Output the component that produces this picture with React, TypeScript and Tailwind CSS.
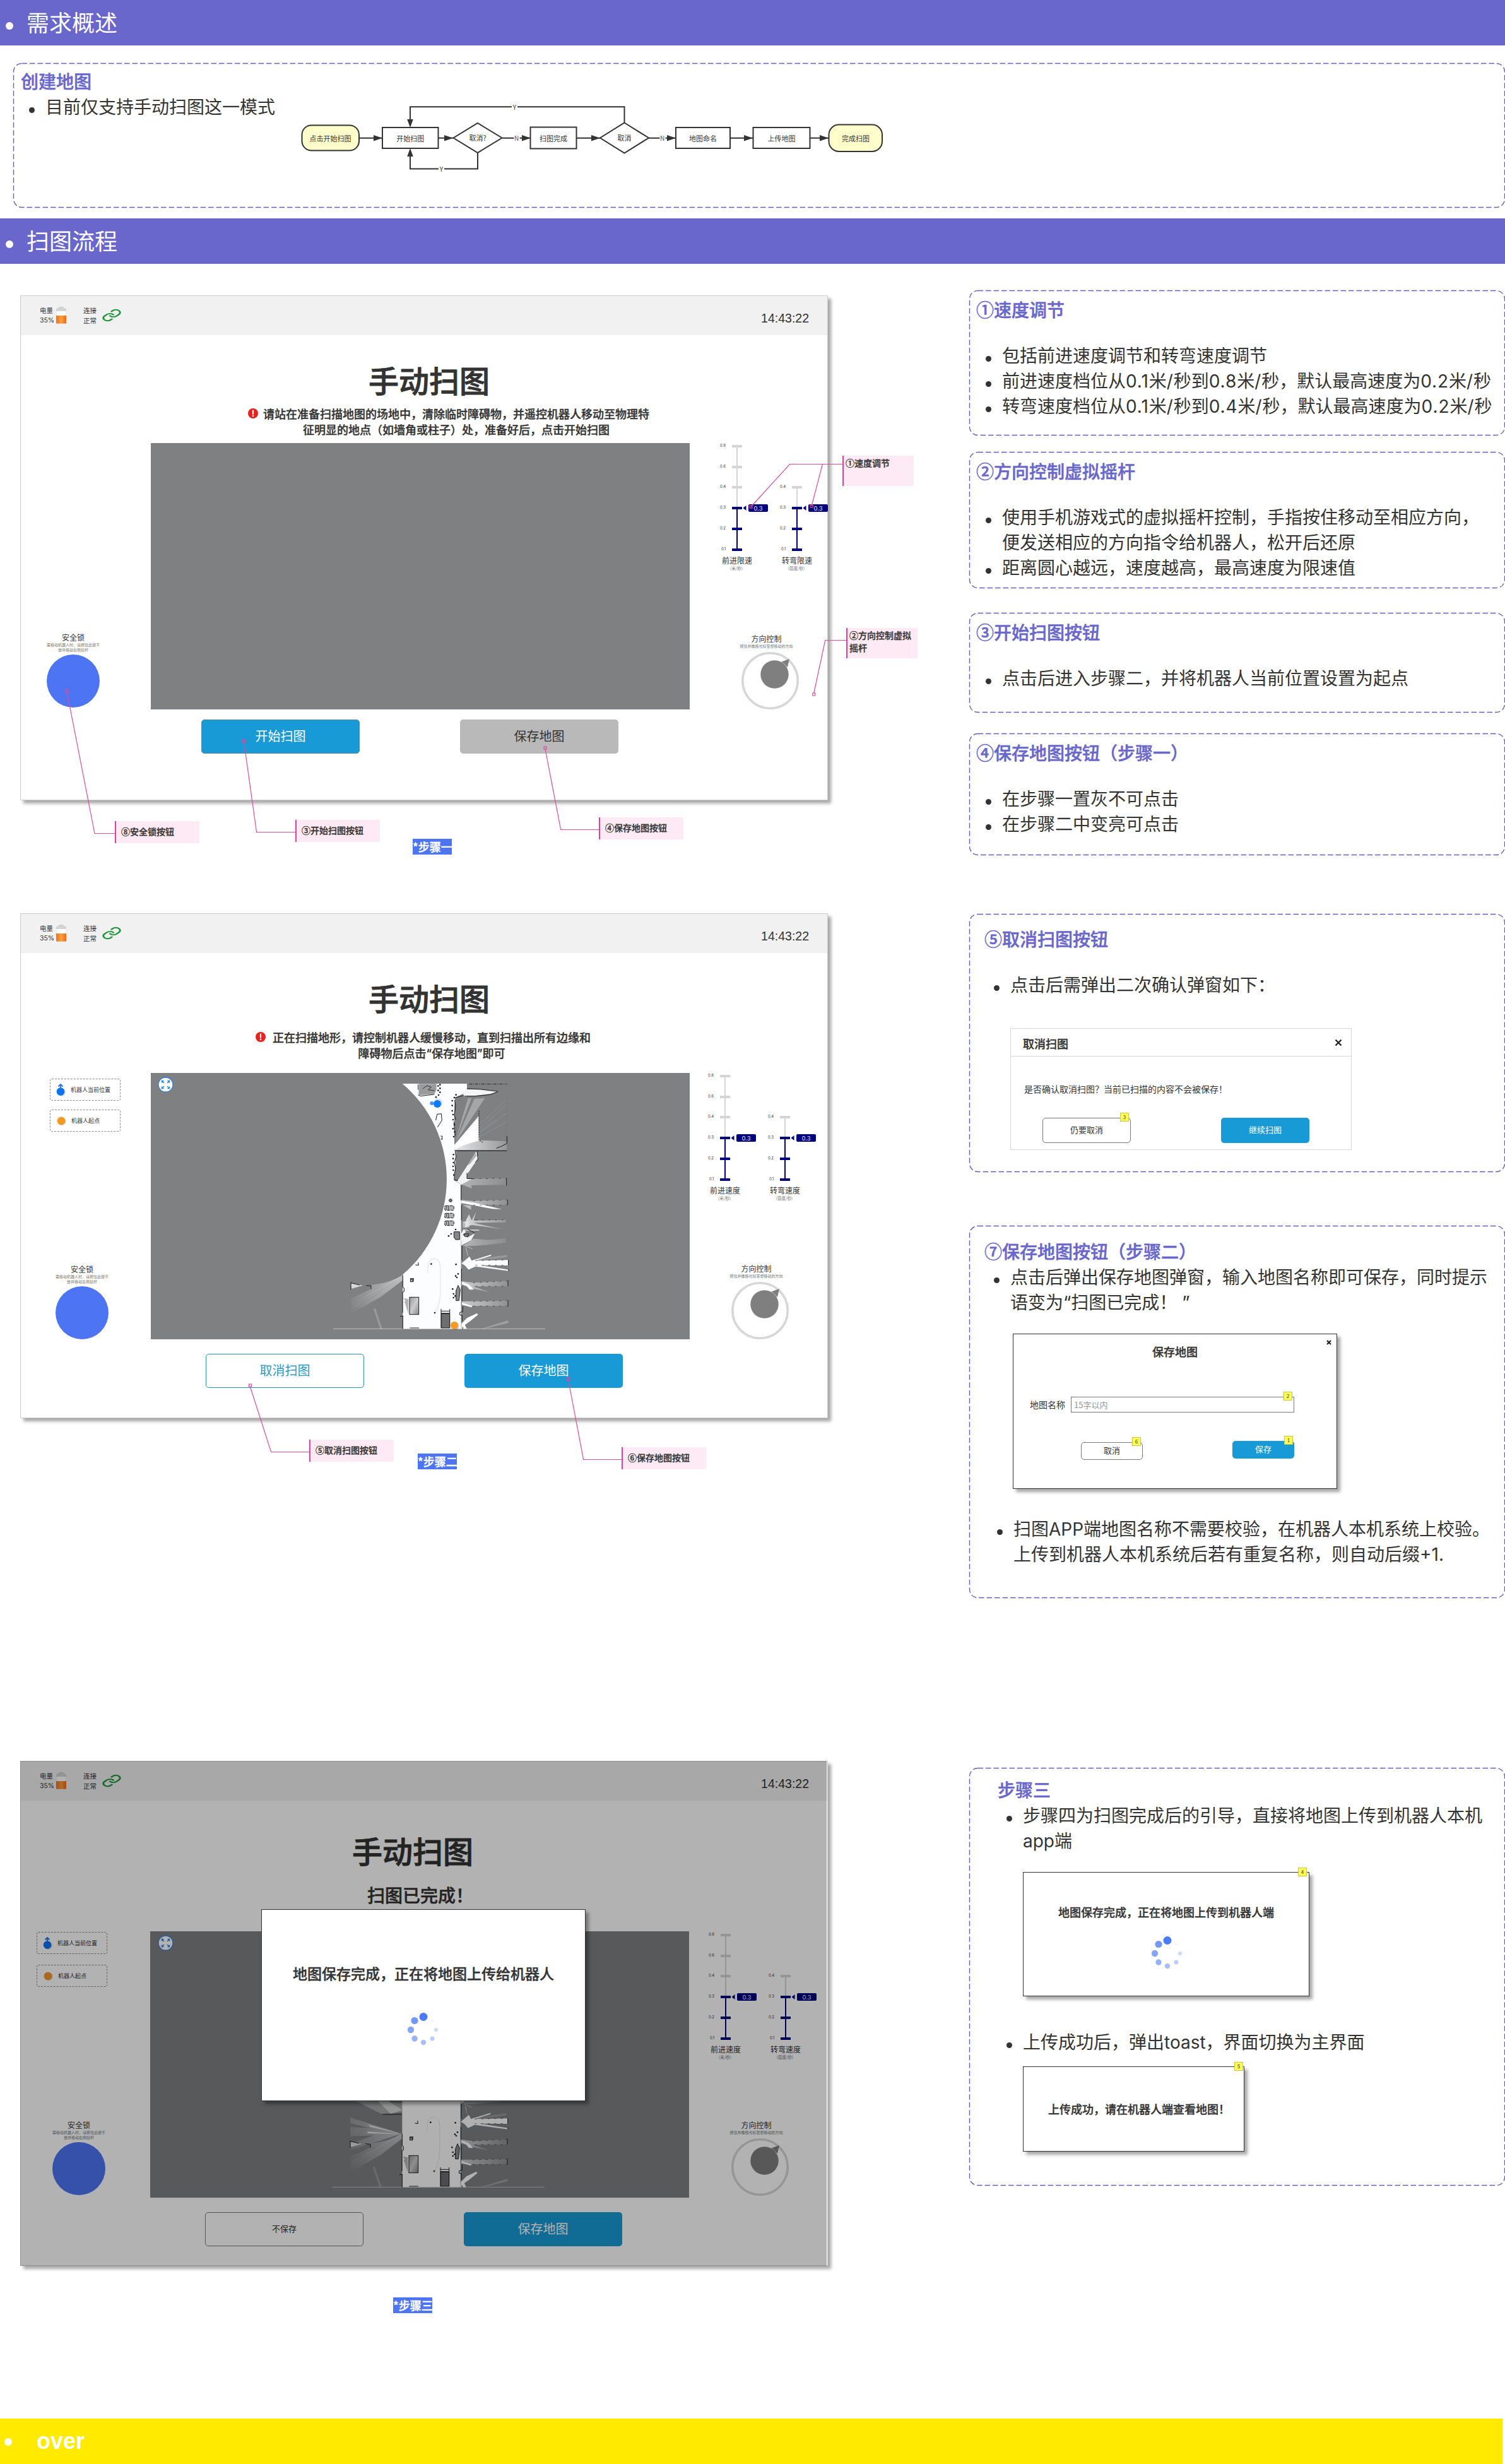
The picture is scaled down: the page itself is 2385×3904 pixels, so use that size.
import type { ReactNode } from "react";
import { Link } from "lucide-react";

/* ---------- shared pieces ---------- */

function SectionBar({ children }: { children: ReactNode }) {
  return (
    <div className="flex h-[72px] items-center bg-[#6966cc] pl-[9px] text-white">
      <span className="mt-[10px] size-3 rounded-full bg-white" />
      <h1 className="ml-[21px] pb-1 text-[36px] leading-[48px]">{children}</h1>
    </div>
  );
}

function DashedFrame() {
  return (
    <svg className="pointer-events-none absolute inset-0 size-full overflow-visible">
      <rect x="0.5" y="0.5" width="100%" height="100%" rx="13" fill="none" stroke="#6462b8" strokeWidth="1.4" strokeDasharray="8.5 4" />
    </svg>
  );
}

function Panel({ className, children }: { className: string; children: ReactNode }) {
  return (
    <section className={`relative w-[848px] ${className}`}>
      <DashedFrame />
      {children}
    </section>
  );
}

function PanelTitle({ className = "", children }: { className?: string; children: ReactNode }) {
  return (
    <h2 className={`text-[28px] leading-[40px] font-medium text-[#6966cc] [-webkit-text-stroke:0.5px_#6966cc] ${className}`}>
      {children}
    </h2>
  );
}

function Bullet({ className = "", children }: { className?: string; children: ReactNode }) {
  return (
    <li className={`relative top-[2px] flex ${className}`}>
      <span className="mt-[20px] mr-[17px] size-[9px] shrink-0 rounded-full bg-[#333]" />
      <p className="font-[Inter,'Noto_Sans_CJK_SC',sans-serif] text-[28px] leading-[40px] whitespace-pre">{children}</p>
    </li>
  );
}

function Num({ children }: { children: ReactNode }) {
  return <span className="tracking-[0.9px]">{children}</span>;
}

function NoteBadge({ className, children }: { className: string; children: ReactNode }) {
  return (
    <span className={`absolute flex size-[14px] items-center justify-center border border-[#c9c93e] bg-[#ffff55] text-[8px] leading-none text-[#333] ${className}`}>
      {children}
    </span>
  );
}

const SPINNER_DOTS = [
  [0, -20.5, 6.5, "#4a7bf9"],
  [-14, -14.5, 5.6, "#7398fb"],
  [-20, 0, 5.2, "#84a5fa"],
  [-14, 14, 4.7, "#96b2fa"],
  [0, 20, 4.2, "#a7bffb"],
  [14, 14, 3.5, "#bccdfb"],
  [20, 0, 3.1, "#ccd9fb"],
  [14, -14.5, 2, "#eef3fe"],
] as const;

function Spinner({ className }: { className: string }) {
  return (
    <svg viewBox="-28 -28 56 56" className={`size-14 ${className}`}>
      {SPINNER_DOTS.map(([x, y, r, fill]) => (
        <circle key={fill} cx={x} cy={y} r={r} fill={fill} />
      ))}
    </svg>
  );
}

/* ---------- flow chart ---------- */

function FlowArrow({ x1, x2, label }: { x1: number; x2: number; label?: boolean }) {
  const mid = (x1 + x2) / 2;
  return (
    <g>
      <path d={`M${x1} 218.7H${x2}`} stroke="#333" strokeWidth="2" />
      <path d={`M${x2} 218.7l-14 -4.8v9.6z`} fill="#333" />
      {label && (
        <>
          <rect x={mid - 4} y="213" width="9" height="12" fill="#fff" />
          <text x={mid} y="223" fontSize="10" textAnchor="middle" fill="#555">N</text>
        </>
      )}
    </g>
  );
}

function FlowChart() {
  const boxes = [
    [606, 202, 88.5, 33, "开始扫图"],
    [840.5, 201.5, 73, 34, "扫图完成"],
    [1071, 202, 86, 33, "地图命名"],
    [1193.5, 202, 90, 33, "上传地图"],
  ] as const;
  return (
    <svg viewBox="470 150 940 130" className="absolute top-[50px] left-[449px] h-[130px] w-[940px]" fill="none">
      <g stroke="#333" strokeWidth="2">
        <path d="M989.5 195V169.3H650V190" />
        <path d="M757 242V267.5H650V246" />
        <rect x="478.5" y="198.5" width="90.5" height="40" rx="15" fill="#ffffcc" />
        <rect x="1313.5" y="197.5" width="84.5" height="42.5" rx="16" fill="#ffffcc" />
        {boxes.map(([x, y, w, h, t]) => (
          <rect key={t} x={x} y={y} width={w} height={h} fill="#fff" />
        ))}
        <path d="M757 195l38.5 23.5l-38.5 23.5l-38.5 -23.5z" fill="#fff" />
        <path d="M989.5 194.5l38.5 24l-38.5 24l-38.5 -24z" fill="#fff" />
      </g>
      <path d="M650 202l-4.8 -13h9.6z" fill="#333" />
      <path d="M650 235l-4.8 13h9.6z" fill="#333" />
      <FlowArrow x1={569} x2={606} />
      <FlowArrow x1={695} x2={718} />
      <FlowArrow x1={796} x2={841} label />
      <FlowArrow x1={914} x2={951} />
      <FlowArrow x1={1028} x2={1071} label />
      <FlowArrow x1={1157} x2={1193} />
      <FlowArrow x1={1283} x2={1313} />
      <rect x="811" y="164" width="9" height="11" fill="#fff" />
      <rect x="695" y="262" width="9" height="11" fill="#fff" />
      <g fontSize="11" textAnchor="middle" fill="#333">
        <text x="815.5" y="174" fontSize="10">Y</text>
        <text x="699.5" y="272" fontSize="10">Y</text>
        <text x="523.5" y="224">点击开始扫图</text>
        <text x="757" y="223">取消?</text>
        <text x="989.5" y="223">取消</text>
        <text x="1356" y="224">完成扫图</text>
        {boxes.map(([x, , w, , t]) => (
          <text key={t} x={x + w / 2} y="224">{t}</text>
        ))}
      </g>
    </svg>
  );
}

/* ---------- tablet screen parts ---------- */

function StatusBar() {
  return (
    <header className="flex h-[62px] shrink-0 bg-[#f1f1f1]">
      <div className="mt-[15px] ml-[30px] w-[22px] text-[10.5px] leading-[15px] whitespace-nowrap">
        电量<br />
        <span className="font-[Inter,sans-serif]">35%</span>
      </div>
      <svg viewBox="0 0 18 28" className="mt-[17px] ml-[3px] h-7 w-[18px] shrink-0">
        <defs>
          <linearGradient id="charge">
            <stop offset="0" stopColor="#f0701c" />
            <stop offset="0.5" stopColor="#fca041" />
            <stop offset="1" stopColor="#ee6a14" />
          </linearGradient>
        </defs>
        <rect x="5" y="0" width="8" height="4" rx="1.5" fill="#cfcfcf" />
        <rect x="1" y="2" width="16" height="25" rx="2.5" fill="#d4d4d4" />
        <rect x="1.5" y="7" width="15" height="8" fill="#fff" />
        <rect x="1" y="14" width="16" height="12.5" fill="url(#charge)" />
      </svg>
      <div className="mt-[15px] ml-[26px] w-[22px] text-[10.5px] leading-[16px] whitespace-nowrap">
        连接<br />正常
      </div>
      <Link className="mt-[20px] ml-[7px] h-[21px] w-[32px]" color="#1c9638" strokeWidth={2.2} preserveAspectRatio="none" />
      <time className="mt-[23px] mr-[29px] ml-auto font-['Liberation_Sans',sans-serif] text-[19.5px] leading-[24px]">14:43:22</time>
    </header>
  );
}

function AlertIcon({ className }: { className: string }) {
  return (
    <svg viewBox="0 0 16 16" className={`size-4 shrink-0 ${className}`}>
      <circle cx="8" cy="8" r="8" fill="#e9201b" />
      <path d="M8 3.5v5.5" stroke="#fff" strokeWidth="2.2" strokeLinecap="round" />
      <circle cx="8" cy="12" r="1.3" fill="#fff" />
    </svg>
  );
}

function SafetyLock({ className }: { className: string }) {
  return (
    <div className={`mt-auto flex w-[84px] flex-col items-center ${className}`}>
      <div className="text-[12px] leading-[16px]">安全锁</div>
      <p className="text-center text-[6px] leading-[8px] whitespace-nowrap text-[#777]">
        需移动机器人时，请按住此键不<br />放并移动右侧摇杆
      </p>
      <div className="mt-[3px] size-[84px] rounded-full bg-[#4d74f2]" />
    </div>
  );
}

function Legends({ className, gap }: { className: string; gap: string }) {
  return (
    <div className={`flex w-[112px] flex-col text-[9px] ${className} ${gap}`}>
      <div className="flex h-[35px] items-center rounded-[3px] border border-dashed border-[#8a8a8a] pl-2">
        <svg viewBox="0 0 18 20" className="h-5 w-[18px]">
          <circle cx="9.5" cy="13.5" r="6.5" fill="#000" opacity=".15" />
          <path d="M8 1v8M4.5 4.5L8 1l3.5 3.5" stroke="#2b7de0" strokeWidth="2" fill="none" />
          <circle cx="8" cy="12.5" r="6.3" fill="#0a73f5" />
        </svg>
        <span className="ml-[6px]">机器人当前位置</span>
      </div>
      <div className="flex h-[35px] items-center rounded-[3px] border border-dashed border-[#8a8a8a] pl-2">
        <svg viewBox="0 0 18 20" className="h-5 w-[18px]">
          <circle cx="10" cy="10.5" r="6.5" fill="#000" opacity=".15" />
          <circle cx="9" cy="10" r="6.5" fill="#f39a27" />
        </svg>
        <span className="ml-[7px]">机器人起点</span>
      </div>
    </div>
  );
}

function SpeedScale({ marks, label, unit }: { marks: [number, string][]; label: string; unit: string }) {
  const top = marks[0][0];
  return (
    <div className="w-[95px] shrink-0">
      <svg viewBox="0 0 95 174" className="h-[174px] w-[95px] overflow-visible">
        <path d={`M40 ${top}V103`} stroke="#d5d5d5" strokeWidth="2" />
        <path d="M40 103V169" stroke="#00007f" strokeWidth="2" />
        {marks.map(([y, t]) => (
          <g key={t}>
            <rect x="32" y={y - 2} width="16" height="4" fill={y < 100 ? "#d5d5d5" : "#00007f"} />
            <text x={t === "0.1" ? 15 : 13} y={y + 0.5} fontSize="6" fill="#333" fontFamily="Inter">{t}</text>
          </g>
        ))}
        <path d="M49.5 103l5 -4v8z" fill="#00007f" />
        <rect x="58" y="97" width="31" height="12" rx="2" fill="#00007f" />
        <text x="73.5" y="106.5" fontSize="9.5" fill="#e6e6ff" textAnchor="middle" fontFamily="Inter">0.3</text>
      </svg>
      <div className="mt-[4px] w-[80px] text-center text-[12px] leading-[16px]">{label}</div>
      <div className="w-[78px] text-center text-[6.5px] leading-[8px] text-[#777]">{unit}</div>
    </div>
  );
}

const FORWARD: [number, string][] = [[5, "0.8"], [38, "0.6"], [70, "0.4"], [103, "0.3"], [136, "0.2"], [169, "0.1"]];
const TURN = FORWARD.slice(2);

function Joystick({ className }: { className: string }) {
  return (
    <div className={`mt-auto w-[91px] ${className}`}>
      <div className="-mx-3 pr-3 text-center text-[12px] leading-[16px]">方向控制</div>
      <div className="-mx-3 pr-3 text-center text-[6px] leading-[8px] whitespace-nowrap text-[#777]">按住并推移光标至想移动的方向</div>
      <svg viewBox="0 0 91 91" className="mt-[5px] size-[91px]">
        <circle cx="45.5" cy="45.5" r="43.7" fill="#fff" stroke="#d7d7d7" strokeWidth="3.6" />
        <path d="M62 16L76 11L73 24z" fill="#7f7f7f" />
        <circle cx="52.5" cy="35.5" r="22.5" fill="#7f7f7f" stroke="#fff" strokeWidth="0.5" />
      </svg>
    </div>
  );
}

const WALL_DOTS = [
  [590, 132], [590, 155], [590, 180], [594, 198], [594, 222], [600, 245], [594, 265], [602, 280], [597, 303],
  [596, 388], [594, 407], [596, 426], [594, 444], [595, 462], [598, 485], [608, 104], [600, 117], [513, 115],
  [525, 105], [532, 92], [523, 83], [532, 73], [523, 62], [532, 56], [606, 744], [585, 765], [573, 775], [608, 910],
  [490, 908], [606, 965], [618, 955], [612, 972], [592, 1027], [596, 1050], [596, 1068], [604, 1060], [507, 1140],
];

function ScanMap({ full }: { full?: boolean }) {
  return (
    <svg viewBox="-843 0 2562 1266" className="h-[422px] w-[854px]" fill="none">
      <defs>
        <linearGradient id="ray" gradientUnits="userSpaceOnUse" x1="635" y1="0" x2="860" y2="0">
          <stop offset="0" stopColor="#fff" stopOpacity=".75" />
          <stop offset="1" stopColor="#fff" stopOpacity=".15" />
        </linearGradient>
        <linearGradient id="rayLeft" gradientUnits="userSpaceOnUse" x1="355" y1="960" x2="108" y2="1100">
          <stop offset="0" stopColor="#fff" stopOpacity=".5" />
          <stop offset="1" stopColor="#fff" stopOpacity=".03" />
        </linearGradient>
        <linearGradient id="crate" x1="0" y1="0" x2="1" y2="1">
          <stop offset="0" stopColor="#999" />
          <stop offset=".5" stopColor="#ccc" />
          <stop offset="1" stopColor="#888" />
        </linearGradient>
      </defs>
      {/* corridor */}
      <path d={full
        ? "M355 51H660V75L604 116L600 160V370L610 372V505L632 532V604V1217H355z"
        : "M353 51H660V75L640 100L604 116L600 160V370L608 372L600 510L632 532V604V1217H355V958A595 595 0 0 0 353 51z"} fill="#fcfdfe" />
      {/* fans of scanned space to the right */}
      <path d="M655 78H725L808 88L770 100L700 108L650 112L640 98z" fill="#f4f5f6" />
      <path d="M600 345L716 270L720 320L850 325V366H600z" fill="url(#ray)" />
      <path d="M600 342L716 205V300L720 320L640 345L602 366z" fill="#fff" />
      <path d="M604 325L665 120H682zM606 328L695 122L745 120z" fill="#fff" opacity=".3" />
      <path d="M720 245L850 125M722 262L850 150M722 285L850 190M720 302L850 232M722 275L800 222" stroke="#fff" opacity=".2" strokeWidth="2" />
      <path d="M850 120V335" stroke="#6d6e70" strokeWidth="2" strokeDasharray="5 7" />
      <path d="M618 508L705 372L714 405L660 482V500L685 503L632 532L610 515z" fill="#f2f2f3" />
      <path d="M660 440L700 382L708 390L675 432z" fill="#888" opacity=".6" />
      <path d="M632 532L685 503L850 500V532L680 534L684 550L640 532z" fill="url(#ray)" opacity=".55" />
      <path d="M632 604L685 608L855 602L853 628L760 628L640 618zM640 628L680 630V650z" fill="url(#ray)" opacity=".75" />
      <path d="M634 608L700 618L826 648L780 646L632 618z" fill="#fff" />
      <path d="M640 712L785 675L680 702L845 698V710L690 712L840 745L680 722zM655 700L670 672L690 720L650 735zM680 705L704 660L690 705z" fill="url(#ray)" />
      <path d="M640 705h30v30h-30z" fill="#eee" opacity=".5" />
      <path d="M632 765L645 742L655 755L640 770L662 782L698 762L680 795L634 820z" fill="#f4f4f4" />
      <path d="M640 745L718 744V750L660 750z" fill="url(#ray)" />
      <path d="M640 822L690 788L760 794L845 786V808L700 822z" fill="url(#ray)" opacity=".55" />
      <path d="M650 822L686 836M655 830L664 868" stroke="#fff" opacity=".5" strokeWidth="3" />
      <path d="M634 905L672 872L682 892L775 863V869L700 892L857 889V915L720 914L858 935V941L700 920L668 935L650 915z" fill="#fcfcfc" />
      <path d="M690 888L850 865V875L720 892z" fill="#fff" opacity=".2" />
      <path d="M634 990L690 997L855 988V1014L690 1015L770 1042L690 1025z" fill="url(#ray)" opacity=".8" />
      <path d="M636 992L670 1006L693 1030L672 1030L660 1015L636 1005z" fill="#fff" />
      <path d="M636 1086L855 1082V1108L690 1108L640 1102z" fill="url(#ray)" opacity=".8" />
      <path d="M636 1092L685 1108L682 1114L636 1102z" fill="#fff" />
      <path d="M634 1192L660 1165L708 1142L712 1150L675 1180L650 1198L660 1217H634z" fill="#fff" />
      <path d="M725 1217L855 1176L858 1188L760 1212z" fill="#fff" opacity=".25" />
      {/* fans to the left */}
      <path d="M355 960V985L250 1065L112 1140L108 1072L200 1030L205 1008Q290 1000 355 960z" fill="url(#rayLeft)" />
      <path d="M345 968L110 1120M345 970L112 1100M348 968L180 1060M350 972L150 1125" stroke="#fff" opacity=".15" strokeWidth="2" />
      <path d="M108 998L165 1010L110 1026z" fill="#d8d8d8" />
      <path d="M215 1120H225L258 1217H247z" fill="#fff" opacity=".2" />
      {full && (
        <g>
          <path d="M352 962L108 885V912L200 935L108 930V975L220 970L108 1010V1040z" fill="url(#rayLeft)" />
          <path d="M352 962L190 918L205 930zM352 964L190 952V960z" fill="#fff" opacity=".7" />
          <path d="M355 860L260 870L130 804L160 806L355 815z" fill="#fff" opacity=".3" />
          <path d="M355 850L300 868L240 806H290z" fill="#fff" opacity=".5" />
          <path d="M260 870H352" stroke="#1c1c1e" strokeWidth="3" />
        </g>
      )}
      <path d="M24 1216H1032" stroke="#c9cacb" strokeWidth="2.5" />
      {/* walls */}
      <g stroke="#1c1c1e" strokeWidth="3">
        <path d="M428 54V80M428 105L440 110L470 106L505 102M662 75L725 78L790 86L808 88M650 110L700 110L770 103L805 90M604 118L640 108" />
        <path d="M602 128L606 160L600 200L606 222M598 232L604 300M850 300V335L825 348L800 358M604 370H850M604 372L608 400L600 425L606 455L600 480V510H618" />
        <path d="M717 180V320L738 330" strokeDasharray="7 4" />
        <path d="M660 475V502L688 503M632 532V604M708 372L712 410L700 425M634 628V700M848 500V535M853 603V628M636 822V890M634 930V990M857 888V915M858 932V942M636 1014V1085M855 985V1014M855 1080V1110M640 1110V1135L626 1138V1150L637 1152V1180M640 1208V1217" />
        <path d="M355 962V1018L361 1022V1040L354 1042V1140M355 1156V1217M342 1156H358M388 1212H432M108 995V1030M108 998L150 1008M180 1010L204 1012V1028" />
        <path d="M512 225L518 196L538 194L541 225L520 258M535 300H542V318L536 312M428 900L430 914L415 912" />
      </g>
      <path d="M688 503L850 501M690 608L850 603M690 628L850 628M700 698L845 698M700 892L850 889M700 914L855 914M690 997L850 989M700 1014H850M690 1086L850 1082M690 1108L850 1108" stroke="#2a2a2c" strokeWidth="2" strokeDasharray="9 22" />
      <path d="M432 52H515V80L505 100L440 105H430z" fill="#9b9b9b" />
      <path d="M470 60l20 8l-15 12l30 4M450 75l20-15" stroke="#333" strokeWidth="3" />
      <path d="M670 53H850" stroke="#222" strokeWidth="3" strokeDasharray="14 5 4 6" />
      <path d="M598 755H625V792H606L598 780z" fill="#86878a" stroke="#1c1c1e" strokeWidth="3" />
      <path d="M618 1010L608 1035V1082H622L628 1030z" fill="#8a8b8d" stroke="#1c1c1e" strokeWidth="3" />
      <g stroke="#1d1d1f" strokeWidth="3">
        <rect x="387" y="1066" width="44" height="82" fill="url(#crate)" />
        <path d="M537 1122V1212M578 1122V1212M537 1132H578M537 1142H578" />
        <rect x="538" y="1144" width="40" height="68" fill="#6d6e70" />
        <path d="M645 765h24l-4 12h-16zM662 742l20 10l16 10" />
      </g>
      <path d="M362 1085h20v60zM358 1070l24 5v30z" fill="#b5b5b5" />
      <path d="M475 950Q468 885 505 882Q536 884 534 940V1040Q530 1110 510 1140" stroke="#dfe0e2" strokeWidth="3" />
      {[631, 667, 703].map((y) => (
        <g key={y}>
          <rect x="554" y={y} width="44" height="22" rx="6" fill="#b0b0b0" stroke="#1c1c1e" strokeWidth="3" strokeDasharray="14 4" />
          <path d={`M572 ${y + 2}v18M562 ${y + 4}v14`} stroke="#444" strokeWidth="3" />
        </g>
      ))}
      <circle cx="582" cy="606" r="7" fill="#777" stroke="#222" strokeWidth="3" />
      <path d="M392 978h14l-2 14h-12zM396 982l8 6" stroke="#222" strokeWidth="4" />
      {WALL_DOTS.map(([x, y]) => (
        <circle key={`${x}-${y}`} cx={x} cy={y} r="4" fill="#202022" />
      ))}
      {!full && (
        <>
          <circle cx="493" cy="144" r="9" fill="#4c96f0" />
          <circle cx="524" cy="142" r="20" fill="#000" opacity=".12" />
          <circle cx="519" cy="147" r="18" fill="#0a7bfb" />
          <circle cx="604" cy="1202" r="19" fill="#000" opacity=".18" />
          <circle cx="600" cy="1200" r="18" fill="#f49b26" />
        </>
      )}
    </svg>
  );
}

function ExpandButton({ className }: { className: string }) {
  return (
    <svg viewBox="0 0 25 25" className={`absolute size-[25px] ${className}`} fill="none" stroke="#2f82dd">
      <circle cx="12.5" cy="12.5" r="11.5" fill="#fff" strokeWidth="1.3" />
      <path d="M6.5 9.5V6.5H9.5M6.5 6.5L10 10M15.5 6.5H18.5V9.5M18.5 6.5L15 10M6.5 15.5V18.5H9.5M6.5 18.5L10 15M15.5 18.5H18.5V15.5M18.5 18.5L15 15" strokeWidth="1.4" />
    </svg>
  );
}

function BigButton({ className, children }: { className: string; children: ReactNode }) {
  return (
    <button className={`flex h-[54px] w-[251px] items-center justify-center rounded-[5px] pb-0.5 ${className}`}>
      {children}
    </button>
  );
}

function ScreenFrame({ children }: { children: ReactNode }) {
  return (
    <div className="relative flex h-[800px] w-[1280px] flex-col border border-[#cdcdcd] bg-white shadow-[5px_5px_5px_rgba(0,0,0,0.35)]">
      <StatusBar />
      {children}
    </div>
  );
}

function StepTag({ className, children }: { className: string; children: ReactNode }) {
  return (
    <div className={`flex h-[25px] w-[62px] items-center bg-[#4d74f2] text-[18px] leading-[25px] font-medium whitespace-nowrap text-white [-webkit-text-stroke:0.4px_#fff] ${className}`}>
      {children}
    </div>
  );
}

/* ---------- annotations laid over the screens ---------- */

function Callout({ className, children }: { className: string; children: ReactNode }) {
  return (
    <div className={`absolute border-l-2 border-[#e0409c] bg-[#fdeaf4] text-[14px] leading-[20px] font-medium [-webkit-text-stroke:0.3px_#333] ${className}`}>
      {children}
    </div>
  );
}

function Leaders({ lines }: { lines: { d: string; x: number; y: number }[] }) {
  return (
    <svg className="pointer-events-none absolute inset-0 size-full overflow-visible" fill="none" stroke="#de4a9c" strokeWidth="1.2">
      {lines.map(({ d, x, y }) => (
        <g key={d}>
          <path d={d} />
          <rect x={x - 2} y={y - 2} width="4" height="4" />
        </g>
      ))}
    </svg>
  );
}

/* ---------- the three steps ---------- */

function StepOne() {
  return (
    <div className="relative h-[979px]">
      <ScreenFrame>
        <h2 className="mt-[40px] pl-4 text-center text-[48px] leading-[60px] font-medium [-webkit-text-stroke:0.9px_#333]">手动扫图</h2>
        <div className="mt-[12px] ml-[360px] flex text-[18px] leading-[25px] font-medium [-webkit-text-stroke:0.35px_#333]">
          <AlertIcon className="mt-[4px] mr-[8px]" />
          <p className="text-center whitespace-nowrap">
            请站在准备扫描地图的场地中，清除临时障碍物，并遥控机器人移动至物理特<br />
            征明显的地点（如墙角或柱子）处，准备好后，点击开始扫图
          </p>
        </div>
        <div className="mt-[9px] flex h-[422px]">
          <div className="flex w-[206px] shrink-0 flex-col">
            <SafetyLock className="mb-[3px] ml-[41px]" />
          </div>
          <div className="w-[854px] shrink-0 bg-[#7f8082]" />
          <div className="flex w-[218px] shrink-0 flex-col">
            <div className="ml-[35px] flex items-end">
              <SpeedScale marks={FORWARD} label="前进限速" unit="(米/秒)" />
              <SpeedScale marks={TURN} label="转弯限速" unit="(弧度/秒)" />
            </div>
            <Joystick className="ml-[82px]" />
          </div>
        </div>
        <div className="mt-4 flex gap-[159px] pl-[286px] text-[20px]">
          <BigButton className="border border-[#5b8696] bg-[#189ad6] text-white">开始扫图</BigButton>
          <BigButton className="bg-[#b9b9b9]">保存地图</BigButton>
        </div>
      </ScreenFrame>
      <StepTag className="mt-[61px] ml-[622px]">*步骤一</StepTag>

      <Callout className="top-[254px] left-[1303px] h-12 w-[113px] pt-px pl-[3px]">①速度调节</Callout>
      <Callout className="top-[527px] left-[1309px] h-12 w-[113px] pt-px pl-[3px]">②方向控制虚拟<br />摇杆</Callout>
      <Callout className="top-[833px] left-[150px] h-[35px] w-[134px] pt-1.5 pl-2">⑧安全锁按钮</Callout>
      <Callout className="top-[831px] left-[436px] h-[35px] w-[134px] pt-1.5 pl-2">③开始扫图按钮</Callout>
      <Callout className="top-[827px] left-[917px] h-[35px] w-[134px] pt-1.5 pl-2">④保存地图按钮</Callout>
      <Leaders
        lines={[
          { d: "M1303 267.5H1219.5L1158 335", x: 1158, y: 335 },
          { d: "M1271.5 267.5L1254 334", x: 1254, y: 334 },
          { d: "M1309 546.5H1275.7L1257.8 630", x: 1257.8, y: 632 },
          { d: "M150 852.5H118L74 628", x: 74, y: 626 },
          { d: "M436 850.5H374.6L354.6 708", x: 354.6, y: 706 },
          { d: "M917 846.5H856.7L832 719", x: 832, y: 717 },
        ]}
      />
    </div>
  );
}

function StepTwo() {
  return (
    <div className="relative h-[1343px]">
      <ScreenFrame>
        <h2 className="mt-[40px] pl-4 text-center text-[48px] leading-[60px] font-medium [-webkit-text-stroke:0.9px_#333]">手动扫图</h2>
        <div className="mt-[21px] ml-[372px] flex h-[49px] text-[18px] leading-[24.5px] font-medium [-webkit-text-stroke:0.35px_#333]">
          <AlertIcon className="mt-[4px] mr-[11px]" />
          <p className="text-center whitespace-nowrap">
            正在扫描地形，请控制机器人缓慢移动，直到扫描出所有边缘和<br />
            障碍物后点击<span className="font-[Inter,sans-serif] leading-none">“</span>保存地图<span className="font-[Inter,sans-serif] leading-none">”</span>即可
          </p>
        </div>
        <div className="mt-[20px] flex h-[422px]">
          <div className="flex w-[206px] shrink-0 flex-col">
            <Legends className="mt-[9px] ml-[46px]" gap="gap-[14px]" />
            <SafetyLock className="ml-[55px]" />
          </div>
          <div className="relative w-[854px] shrink-0 bg-[#7f8082]">
            <ScanMap />
            <ExpandButton className="top-[6px] left-[11px]" />
          </div>
          <div className="flex flex-1 flex-col">
            <div className="ml-[16px] flex items-end">
              <SpeedScale marks={FORWARD} label="前进速度" unit="(米/秒)" />
              <SpeedScale marks={TURN} label="转弯速度" unit="(弧度/秒)" />
            </div>
            <Joystick className="ml-[66px]" />
          </div>
        </div>
        <div className="mt-[23px] flex gap-[159px] pl-[293px] text-[20px]">
          <BigButton className="border border-[#2a94ba] text-[#2a9ac6]">取消扫图</BigButton>
          <BigButton className="bg-[#189ad6] text-white">保存地图</BigButton>
        </div>
      </ScreenFrame>
      <StepTag className="mt-[56px] ml-[630px]">*步骤二</StepTag>

      <Callout className="top-[834px] left-[458px] h-[35px] w-[134px] pt-1.5 pl-2">⑤取消扫图按钮</Callout>
      <Callout className="top-[846px] left-[953px] h-[35px] w-[134px] pt-1.5 pl-2">⑥保存地图按钮</Callout>
      <Leaders
        lines={[
          { d: "M458 853.5H397.6L364.4 750", x: 364.4, y: 748 },
          { d: "M953 865.5H892.6L868.7 740", x: 868.7, y: 738 },
        ]}
      />
    </div>
  );
}

function StepThree() {
  return (
    <div className="relative h-[1042px]">
      <ScreenFrame>
        <h2 className="mt-[48px] pr-[36px] text-center text-[48px] leading-[60px] font-medium [-webkit-text-stroke:0.9px_#333]">手动扫图</h2>
        <p className="mt-[21px] ml-[549px] text-[28px] leading-[40px] font-medium [-webkit-text-stroke:0.5px_#333]">扫图已完成！</p>
        <div className="mt-[38px] flex h-[422px]">
          <div className="flex w-[205px] shrink-0 flex-col">
            <Legends className="mt-[1px] ml-[25px]" gap="gap-[17px]" />
            <SafetyLock className="mb-1 ml-[50px]" />
          </div>
          <div className="relative w-[854px] shrink-0 bg-[#7f8082]">
            <ScanMap full />
            <ExpandButton className="top-[6px] left-[12px]" />
          </div>
          <div className="flex flex-1 flex-col">
            <div className="mt-px ml-[18px] flex items-end">
              <SpeedScale marks={FORWARD} label="前进速度" unit="(米/秒)" />
              <SpeedScale marks={TURN} label="转弯速度" unit="(弧度/秒)" />
            </div>
            <Joystick className="mb-[3px] ml-[67px]" />
          </div>
        </div>
        <div className="mt-[23px] flex gap-[159px] pl-[292px] text-[20px]">
          <BigButton className="border border-[#797979] text-[13px]">不保存</BigButton>
          <BigButton className="bg-[#189ad6] text-white">保存地图</BigButton>
        </div>
        <div className="absolute -inset-px right-[1px] bg-black/30" />
        <div className="absolute top-[234px] left-[381px] flex h-[304px] w-[514px] flex-col items-center border border-[#333] bg-white shadow-[5px_5px_5px_rgba(0,0,0,0.35)]">
          <p className="mt-[84px] text-[23px] leading-[32px] font-medium whitespace-nowrap [-webkit-text-stroke:0.4px_#333]">地图保存完成，正在将地图上传给机器人</p>
          <Spinner className="mt-[46px]" />
        </div>
      </ScreenFrame>
      <StepTag className="mt-[50px] ml-[591px]">*步骤三</StepTag>
    </div>
  );
}

/* ---------- right column dialogs ---------- */

const SHADOW_BOX = "relative border border-[#333] bg-white shadow-[5px_5px_5px_rgba(0,0,0,0.35)]";

function CancelDialog() {
  return (
    <div className="mt-[50px] ml-[65px] h-[193px] w-[541px] border border-[#d7d7d7] text-[14px]">
      <div className="flex h-[44px] items-center justify-between border-b border-[#d7d7d7] pr-[14px] pl-[19px]">
        <h3 className="pt-1 text-[18px] font-medium [-webkit-text-stroke:0.35px_#333]">取消扫图</h3>
        <svg viewBox="0 0 12 12" className="size-3">
          <path d="M1.5 1.5l9 9M10.5 1.5l-9 9" stroke="#222" strokeWidth="2.4" />
        </svg>
      </div>
      <p className="mt-[41px] ml-[21px] leading-[20px]">是否确认取消扫图？当前已扫描的内容不会被保存！</p>
      <div className="mt-[36px] flex gap-[143px] pl-[50px] text-[13px]">
        <button className="relative h-10 w-[140px] rounded-[5px] border border-[#797979] pb-0.5">
          仍要取消
          <NoteBadge className="-top-[9px] right-[2px]">3</NoteBadge>
        </button>
        <button className="h-10 w-[140px] rounded-[5px] bg-[#189ad6] pb-0.5 text-white">继续扫图</button>
      </div>
    </div>
  );
}

function SaveDialog() {
  return (
    <div className={`mt-[31px] ml-[69px] h-[246px] w-[514px] ${SHADOW_BOX}`}>
      <svg viewBox="0 0 8 8" className="absolute top-[9px] right-[8px] size-2">
        <path d="M1 1l6 6M7 1l-6 6" stroke="#222" strokeWidth="2.2" />
      </svg>
      <h3 className="mt-[13px] text-center text-[18px] leading-[28px] font-medium [-webkit-text-stroke:0.35px_#333]">保存地图</h3>
      <div className="mt-[58px] ml-[26px] flex items-center text-[14px]">
        <label className="w-[65px]">地图名称</label>
        <div className="relative flex h-[25px] w-[354px] items-center border border-[#797979] pl-[4px] text-[13px] text-[#999]">
          15字以内
          <NoteBadge className="-top-[9px] right-[2px]">2</NoteBadge>
        </div>
      </div>
      <div className="mt-[45px] flex gap-[142px] pl-[107px] text-[13px]">
        <button className="relative mt-[2px] h-[28px] w-[98px] rounded-[5px] border border-[#797979] pb-0.5">
          取消
          <NoteBadge className="-top-[9px] right-[2px]">6</NoteBadge>
        </button>
        <button className="relative h-[28px] w-[98px] rounded-[5px] bg-[#189ad6] pb-0.5 text-white">
          保存
          <NoteBadge className="-top-[8px] right-[2px]">1</NoteBadge>
        </button>
      </div>
    </div>
  );
}

export default function App() {
  return (
    <div className="min-h-[3904px] w-[2385px] overflow-hidden bg-white font-['Noto_Sans_CJK_SC',sans-serif] text-[#333]">
      <SectionBar>需求概述</SectionBar>
      <section className="relative mt-[28px] ml-[21px] h-[228px] w-[2363px]">
        <DashedFrame />
        <PanelTitle className="pt-[8px] pl-[12px]">创建地图</PanelTitle>
        <ul className="pl-[25px]">
          <Bullet>目前仅支持手动扫图这一模式</Bullet>
        </ul>
        <FlowChart />
      </section>
      <div className="mt-[18px]">
        <SectionBar>扫图流程</SectionBar>
      </div>

      <div className="flex h-[3414px]">
        <main className="w-[1536px] pt-[50px] pl-[32px]">
          <StepOne />
          <StepTwo />
          <StepThree />
        </main>

        <aside className="w-[849px]">
          <Panel className="mt-[42px] h-[229px] pt-[10px] pl-[11px]">
            <PanelTitle>①速度调节</PanelTitle>
            <ul className="mt-[32px] pl-[15px]">
              <Bullet>包括前进速度调节和转弯速度调节</Bullet>
              <Bullet>前进速度档位从<Num>0.1</Num>米<Num>/</Num>秒到<Num>0.8</Num>米<Num>/</Num>秒，默认最高速度为<Num>0.2</Num>米<Num>/</Num>秒</Bullet>
              <Bullet>转弯速度档位从<Num>0.1</Num>米<Num>/</Num>秒到<Num>0.4</Num>米<Num>/</Num>秒，默认最高速度为<Num>0.2</Num>米<Num>/</Num>秒</Bullet>
            </ul>
          </Panel>
          <Panel className="mt-[27px] h-[215px] pt-[10px] pl-[11px]">
            <PanelTitle>②方向控制虚拟摇杆</PanelTitle>
            <ul className="mt-[32px] pl-[15px]">
              <Bullet>使用手机游戏式的虚拟摇杆控制，手指按住移动至相应方向，<br />便发送相应的方向指令给机器人，松开后还原</Bullet>
              <Bullet>距离圆心越远，速度越高，最高速度为限速值</Bullet>
            </ul>
          </Panel>
          <Panel className="mt-[40px] h-[157px] pt-[10px] pl-[11px]">
            <PanelTitle>③开始扫图按钮</PanelTitle>
            <ul className="mt-[32px] pl-[15px]">
              <Bullet>点击后进入步骤二，并将机器人当前位置设置为起点</Bullet>
            </ul>
          </Panel>
          <Panel className="mt-[34px] h-[192px] pt-[10px] pl-[11px]">
            <PanelTitle>④保存地图按钮（步骤一）</PanelTitle>
            <ul className="mt-[32px] pl-[15px]">
              <Bullet>在步骤一置灰不可点击</Bullet>
              <Bullet>在步骤二中变亮可点击</Bullet>
            </ul>
          </Panel>

          <Panel className="mt-[94px] h-[408px] pt-[19px]">
            <PanelTitle className="pl-[24px]">⑤取消扫图按钮</PanelTitle>
            <ul className="mt-[32px] pl-[39px]">
              <Bullet>点击后需弹出二次确认弹窗如下：</Bullet>
            </ul>
            <CancelDialog />
          </Panel>

          <Panel className="mt-[86px] h-[589px] pt-[20px]">
            <PanelTitle className="pl-[24px]">⑦保存地图按钮（步骤二）</PanelTitle>
            <ul className="pl-[39px]">
              <Bullet>点击后弹出保存地图弹窗，输入地图名称即可保存，同时提示<br />语变为“扫图已完成！ ”</Bullet>
            </ul>
            <SaveDialog />
            <ul className="mt-[42px] pl-[44px]">
              <Bullet>扫图APP端地图名称不需要校验，在机器人本机系统上校验。<br />上传到机器人本机系统后若有重复名称，则自动后缀+1.</Bullet>
            </ul>
          </Panel>

          <Panel className="mt-[270px] h-[661px] pt-[14px]">
            <PanelTitle className="pl-[45px]">步骤三</PanelTitle>
            <ul className="pl-[59px]">
              <Bullet>步骤四为扫图完成后的引导，直接将地图上传到机器人本机<br />app端</Bullet>
            </ul>
            <div className={`mt-[31px] ml-[85px] flex h-[197px] w-[454px] flex-col items-center ${SHADOW_BOX}`}>
              <p className="mt-[49px] text-[18px] leading-[26px] font-medium whitespace-nowrap [-webkit-text-stroke:0.35px_#333]">地图保存完成，正在将地图上传到机器人端</p>
              <Spinner className="mt-[25px] ml-[3px]" />
              <NoteBadge className="-top-[8px] right-[3px]">4</NoteBadge>
            </div>
            <ul className="mt-[51px] pl-[59px]">
              <Bullet>上传成功后，弹出toast，界面切换为主界面</Bullet>
            </ul>
            <div className={`mt-[20px] ml-[85px] h-[135px] w-[351px] ${SHADOW_BOX}`}>
              <p className="mt-[53px] ml-[39px] text-[18px] leading-[26px] font-medium whitespace-nowrap [-webkit-text-stroke:0.35px_#333]">上传成功，请在机器人端查看地图！</p>
              <NoteBadge className="-top-[8px] right-[1px]">5</NoteBadge>
            </div>
          </Panel>
        </aside>
      </div>

      <footer className="flex h-[72px] w-[2381px] items-center bg-[#ffea00] pl-[7px] text-white">
        <span className="mt-[2px] size-3 rounded-full bg-white" />
        <span className="ml-[39px] font-['Liberation_Sans',sans-serif] text-[36px] font-bold">over</span>
      </footer>
    </div>
  );
}
